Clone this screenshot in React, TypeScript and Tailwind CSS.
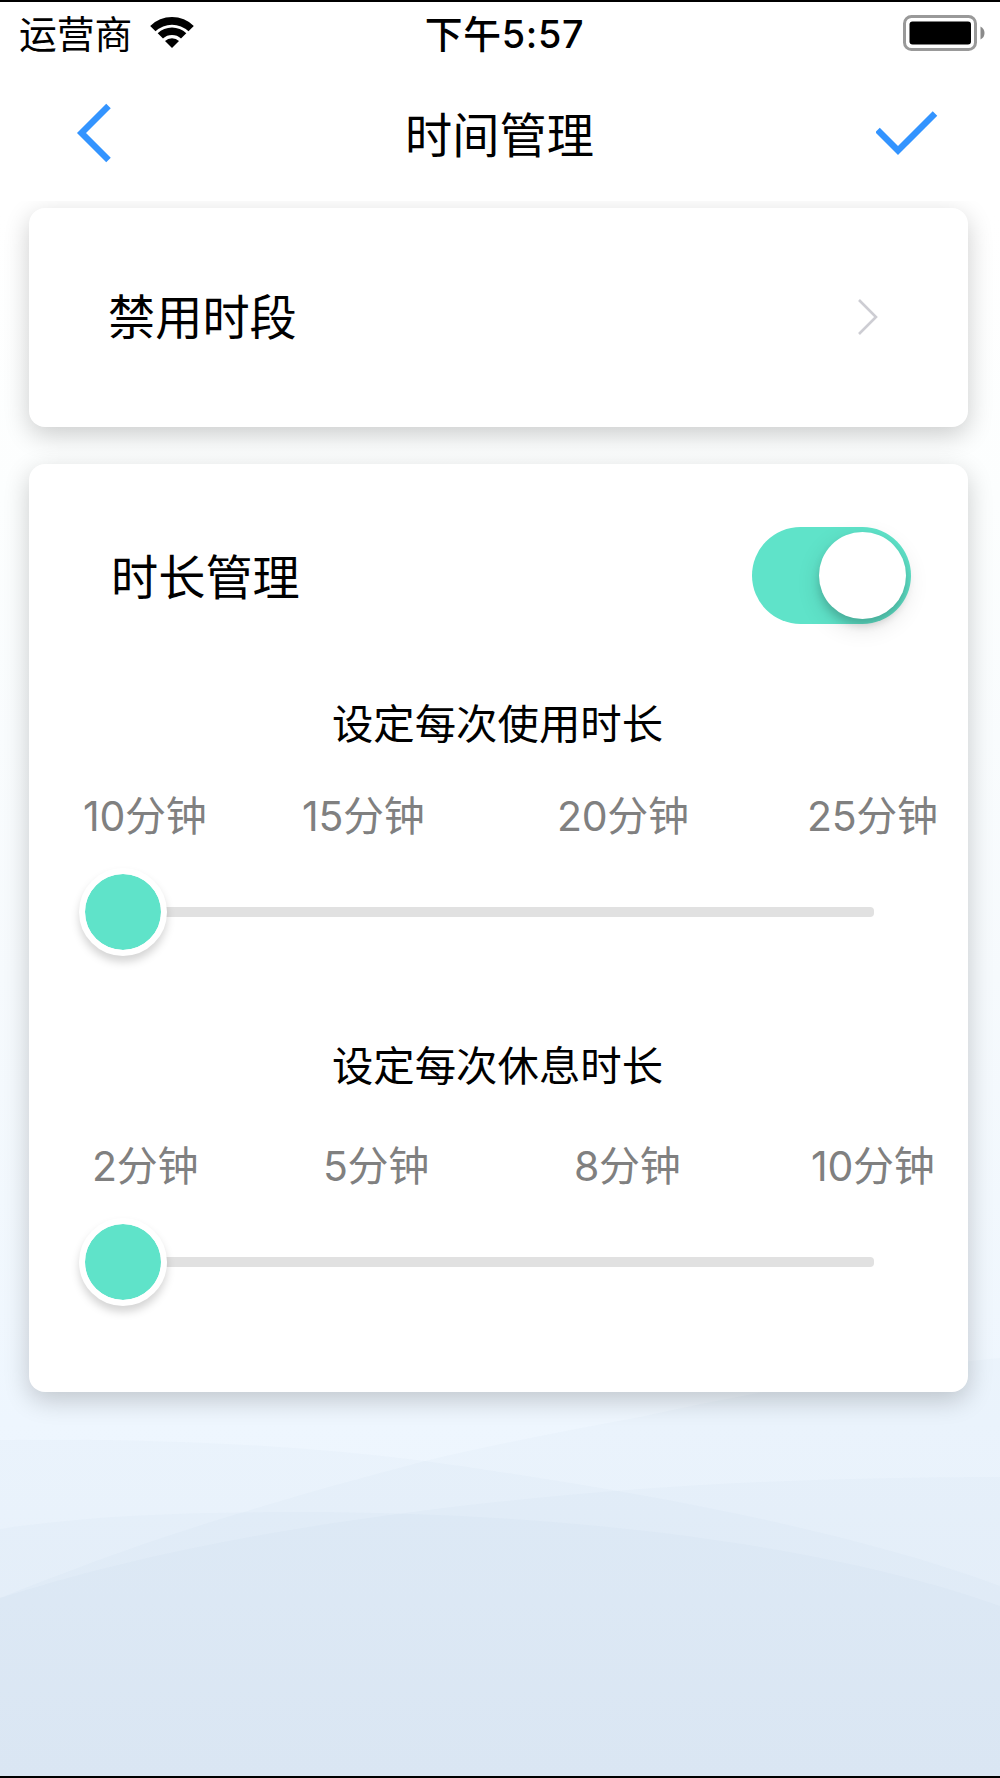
import { useState } from "react";

interface DurationSliderProps {
  title: string;
  marks: string[];
  columns: string;
  titleClass: string;
}

function Backdrop() {
  return (
    <svg className="absolute inset-0 size-full" viewBox="0 2 1000 1774" preserveAspectRatio="none">
      <defs>
        <linearGradient id="sky" x1="0" y1="0" x2="0" y2="1">
          <stop offset="0.12" stopColor="#ffffff" />
          <stop offset="0.28" stopColor="#fcfefe" />
          <stop offset="0.55" stopColor="#f6fafd" />
          <stop offset="0.8" stopColor="#eef6fe" />
          <stop offset="1" stopColor="#eaf2fb" />
        </linearGradient>
      </defs>
      <rect width="1000" height="1778" fill="url(#sky)" />
      <g fill="#6b82a8" fillOpacity="0.028">
        <path d="M0 1440 C150 1438 290 1444 425 1461 C640 1491 850 1530 1000 1586 V1778 H0 Z" />
        <path d="M0 1598 C75 1568 150 1540 240 1513 C300 1495 360 1478 425 1461 C500 1443 570 1430 640 1417 C760 1391 880 1369 1000 1358 V1778 H0 Z" />
        <path d="M0 1598 C120 1560 250 1533 405 1513 C610 1486 800 1477 1000 1477 V1778 H0 Z" />
        <path d="M0 1529 C90 1515 190 1512 300 1512 C550 1512 820 1541 1000 1606 V1778 H0 Z" />
      </g>
    </svg>
  );
}

function StatusBar() {
  return (
    <div className="grid h-[68px] grid-cols-3 items-center pl-[19px] pr-[15px] pt-[2px] text-[37.8px] leading-none">
      <div className="flex items-center gap-[18px]">
        <span>运营商</span>
        <svg className="mb-[5px] h-[32px] w-[44px]" viewBox="0 0 44 32">
          <path d="M0.2 10 A31 31 0 0 1 43.8 10 L38.5 15.3 A24 24 0 0 0 5.5 15.3 Z" />
          <path d="M7.7 17.3 A20.5 20.5 0 0 1 36.3 17.3 L31 22.5 A13.5 13.5 0 0 0 13 22.5 Z" />
          <path d="M15 25 A10 10 0 0 1 29 25 L22 32 Z" />
        </svg>
      </div>
      <span className="pl-[5px] text-center font-medium tracking-[0.7px]">下午5:57</span>
      <svg className="mb-[5px] h-[36px] w-[82px] justify-self-end" viewBox="0 0 82 36">
        <rect x="1.5" y="1.5" width="71" height="33" rx="7" fill="none" stroke="#999" strokeWidth="3" />
        <rect x="6.5" y="6.5" width="61.5" height="23" rx="3" />
        <path d="M77.5 11.5 Q81.5 13.5 81.5 18 Q81.5 22.5 77.5 24.5 Z" fill="#8a8a8a" />
      </svg>
    </div>
  );
}

function NavBar() {
  return (
    <div className="grid h-[133px] grid-cols-[1fr_auto_1fr] items-center pl-[76px] pr-[62px]">
      <svg className="mb-[4px] h-[60px] w-[62px]" viewBox="0 0 62 60" fill="none" stroke="#3394ff" strokeWidth="6.4">
        <path d="M32.5 3 L5.5 30 L32.5 57" />
      </svg>
      <h1 className="-ml-[15px] pt-[2px] text-[47.2px] leading-none">时间管理</h1>
      <svg className="mb-[2px] h-[46px] w-[62px] justify-self-end" viewBox="0 0 62 46" fill="none" stroke="#3394ff" strokeWidth="6.4">
        <path d="M1.5 19 L22 39.5 L59 2.5" />
      </svg>
    </div>
  );
}

function DurationSlider({ title, marks, columns, titleClass }: DurationSliderProps) {
  return (
    <section>
      <h3 className={`pr-[2px] text-center text-[41.4px] leading-[48px] ${titleClass}`}>{title}</h3>
      <div className={`grid whitespace-nowrap text-[41px] leading-[48px] tracking-[-0.3px] text-[#808080] ${columns}`}>
        {marks.map((mark) => (
          <span key={mark}>{mark}</span>
        ))}
      </div>
      <div className="ml-[50px] mt-[28px] flex h-[88px] w-[795px] items-center">
        <div className="z-10 size-[88px] shrink-0 rounded-full border-[6.5px] border-white bg-[#5fe3c9] bg-clip-padding shadow-[0_6px_9px_rgba(0,0,0,0.17)]" />
        <div className="-ml-2 h-[9.5px] flex-1 rounded-r-[4px] bg-[#e1e1e1]" />
      </div>
    </section>
  );
}

export default function App() {
  const [enabled, setEnabled] = useState(true);

  return (
    <div className="relative h-[1778px] w-[1000px] overflow-hidden border-y-2 border-black bg-white font-[Inter,'Noto_Sans_CJK_SC',sans-serif] text-black">
      <Backdrop />

      <div className="relative flex flex-col">
        <header className="z-10 h-[199px] bg-white">
          <div className="-mt-[2px]">
            <StatusBar />
            <NavBar />
          </div>
        </header>

        <main className="flex flex-col gap-[37px] pl-[29px] pr-[32px] pt-[7px]">
          <div className="flex h-[219px] items-center justify-between rounded-[16px] bg-white pl-[79px] pr-[90px] shadow-[0_8px_26px_rgba(0,0,0,0.2)]">
            <h2 className="pt-px text-[47.2px] leading-none">禁用时段</h2>
            <svg className="mb-[2px] h-[36px] w-[20px]" viewBox="0 0 20 36" fill="none" stroke="#cdcdd3" strokeWidth="2.6">
              <path d="M1 1 L18 18 L1 35" />
            </svg>
          </div>

          <div className="h-[928px] rounded-[16px] bg-white pt-[62px] shadow-[0_8px_26px_rgba(0,0,0,0.2)]">
            <div className="flex h-[98px] items-center justify-between pl-[82px] pr-[57px]">
              <h2 className="pt-[5px] text-[47.2px] leading-none">时长管理</h2>
              <button
                role="switch"
                aria-checked={enabled}
                onClick={() => setEnabled(!enabled)}
                className={`flex h-[97px] w-[159px] items-center rounded-full px-[5px] ${enabled ? "justify-end bg-[#5fe3c9]" : "justify-start bg-[#e1e1e1]"}`}
              >
                <span className="size-[87px] rounded-full bg-white shadow-[0_8px_24px_rgba(0,0,0,0.12),0_6px_8px_rgba(0,0,0,0.16)]" />
              </button>
            </div>

            <DurationSlider
              title="设定每次使用时长"
              marks={["10分钟", "15分钟", "20分钟", "25分钟"]}
              columns="mt-[44px] pl-[54px] grid-cols-[219px_255px_250px_auto]"
              titleClass="mt-[76px]"
            />
            <DurationSlider
              title="设定每次休息时长"
              marks={["2分钟", "5分钟", "8分钟", "10分钟"]}
              columns="mt-[52px] pl-[63px] grid-cols-[231px_251px_237px_auto]"
              titleClass="mt-[86px]"
            />
          </div>
        </main>
      </div>
    </div>
  );
}
